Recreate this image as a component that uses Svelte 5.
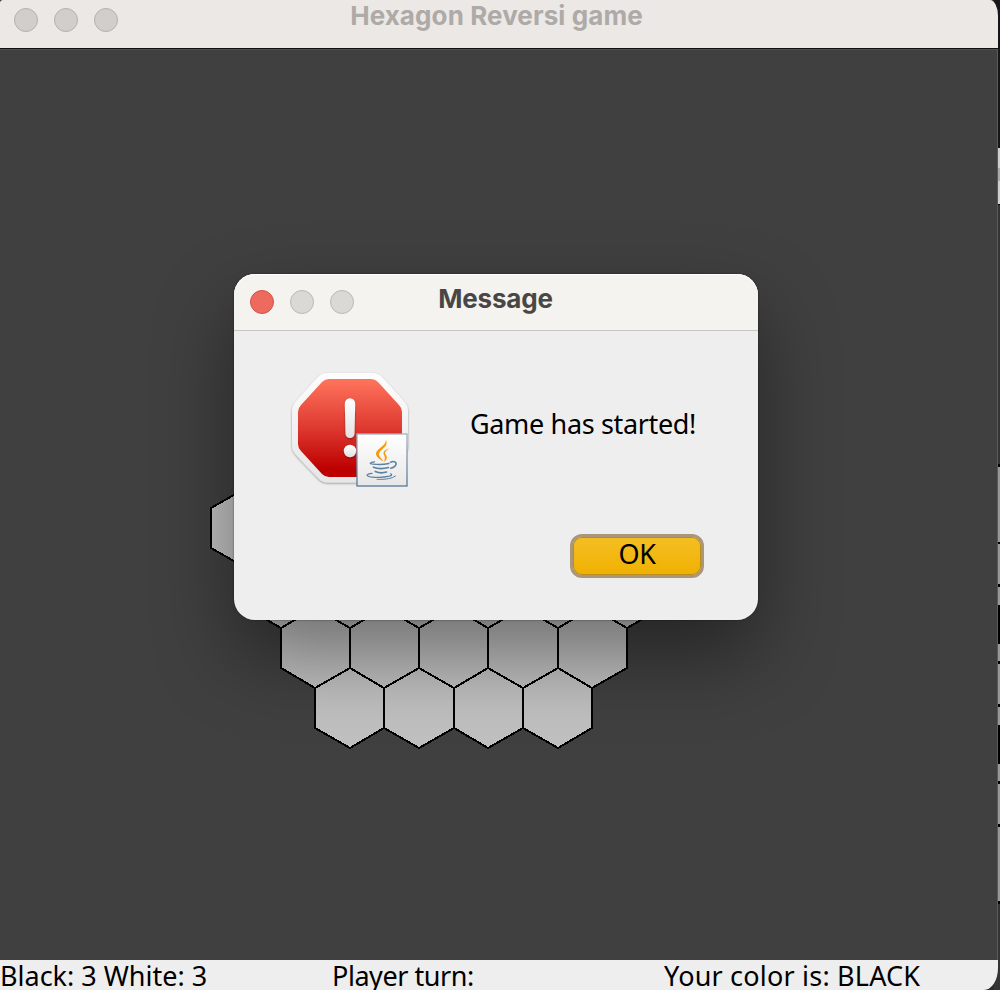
<script>
  const R = 40;
  const W = R * Math.sqrt(3);
  const cx = 453.75;
  const cy = 528;
  const hexes = [];
  for (let r = -3; r <= 3; r++) {
    const n = 7 - Math.abs(r);
    for (let i = 0; i < n; i++) {
      const x = cx + (i - (n - 1) / 2) * W;
      const y = cy + r * 60;
      hexes.push(
        [[0, -R], [W / 2, -R / 2], [W / 2, R / 2], [0, R], [-W / 2, R / 2], [-W / 2, -R / 2]]
          .map(([a, b]) => `${Math.round(x + a)},${Math.round(y + b)}`)
          .join(' ')
      );
    }
  }
  // Sliver of the neighbouring window: [height, tone]
  const strip = [
    [148, 'ink'], [20, 'pale'], [13, 'mid'], [23, 'pale'], [1, 'black'], [259, 'dark'],
    [3, 'black'], [75, 'tile'], [2, 'black'], [40, 'tile'], [3, 'black'], [18, 'tile'],
    [39, 'black'], [17, 'tile'], [3, 'black'], [40, 'tile'], [3, 'black'], [18, 'tile'],
    [39, 'black'], [17, 'tile'], [3, 'black'], [40, 'tile'], [3, 'black'], [74, 'tile'],
    [3, 'black'], [86, 'dark']
  ];
</script>

<div class="desktop">
  <div class="strip">
    {#each strip as [h, tone]}<i class={tone} style="height:{h}px"></i>{/each}
  </div>
  <main class="window">
    <header class="bar">
      <div class="lights"><span></span><span></span><span></span></div>
      <h1>Hexagon Reversi game</h1>
    </header>
    <section class="board">
      <svg width="998" height="911" viewBox="0 49 998 911" shape-rendering="crispEdges">
        {#each hexes as p}
          <polygon points={p} fill="#c0c0c0" stroke="#000" stroke-width="2" />
        {/each}
      </svg>
    </section>
    <footer>
      <span class="score">Black: 3 White: 3</span>
      <span class="turn">Player turn:</span>
      <span class="color">Your color is: BLACK</span>
    </footer>
  </main>

  <div class="dialog" role="dialog" aria-label="Message">
    <header class="dbar">
      <div class="lights"><span class="red"></span><span></span><span></span></div>
      <h2>Message</h2>
    </header>
    <div class="content">
      <svg class="icon" width="140" height="130" viewBox="0 0 140 130">
        <defs>
          <linearGradient id="red" x1="0" y1="0" x2="0" y2="1">
            <stop offset="0" stop-color="#ff745c" />
            <stop offset=".5" stop-color="#de3930" />
            <stop offset=".92" stop-color="#bd0000" />
            <stop offset="1" stop-color="#bd0000" />
          </linearGradient>
          <linearGradient id="rim" x1="0" y1="0" x2="0" y2="1">
            <stop offset="0" stop-color="#fdfdfd" />
            <stop offset="1" stop-color="#e6e6e6" />
          </linearGradient>
          <linearGradient id="mark" x1="0" y1="0" x2="0" y2="1">
            <stop offset="0" stop-color="#fff" />
            <stop offset="1" stop-color="#e2e2e2" />
          </linearGradient>
          <linearGradient id="tile" x1="0" y1="0" x2="0" y2="1">
            <stop offset="0" stop-color="#fff" />
            <stop offset="1" stop-color="#e7e7e8" />
          </linearGradient>
          <linearGradient id="edge" x1="0" y1="0" x2="0" y2="1">
            <stop offset="0" stop-color="#a3b2c3" />
            <stop offset="1" stop-color="#557695" />
          </linearGradient>
          <filter id="soft" x="-20%" y="-20%" width="140%" height="150%">
            <feDropShadow dx="0" dy="1" stdDeviation="1.1" flood-color="#000" flood-opacity=".38" />
          </filter>
        </defs>
        <path filter="url(#soft)" fill="url(#rim)" d="M48 8H92Q98 8 102 12L123 35Q128 40 128 47V80Q128 86 123 91L102 113Q98 117.500 92 117.500H48Q42 117.500 38 113L17 91Q12 86 12 80V47Q12 40 17 35L38 12Q42 8 48 8Z" />
        <path fill="url(#red)" d="M49 14H91Q95 14 98 17L119 40Q122 43 122 47V79Q122 83 119 86L98 109Q95 112 91 112H49Q45 112 42 109L21 86Q18 83 18 79V47Q18 43 21 40L42 17Q45 14 49 14Z" />
        <g fill="url(#mark)" filter="url(#soft)">
          <path d="M64.800 38.500A5.200 5.200 0 0 1 75.200 38.500L74.500 68.500A4.500 4.500 0 0 1 65.500 68.500Z" />
          <circle cx="70" cy="86" r="6.200" />
        </g>
        <rect x="77" y="69" width="50" height="52" fill="url(#tile)" stroke="url(#edge)" stroke-width="1.300" />
        <g fill="#f59a0c">
          <path d="M105.800 74.500C108.500 80 104 82.500 101 85.500C97.500 89 99 91 103.500 96.500C98 93.500 95.200 90.500 96.200 87.500C97.500 83.500 107 80 105.800 74.500Z" />
          <path d="M109.500 83.200C105.500 84.500 102.500 86.500 103.800 89.500C105 91.500 105.500 93.500 103.800 97C108 94.500 107 91 105.700 89.500C104 87.500 105.800 85.500 109.500 83.200Z" />
        </g>
        <g fill="none" stroke="#5c82a1" stroke-linecap="round">
          <path stroke-width="1.300" d="M94.500 96.800C90 97.300 88.500 98.800 93 99.200Q102 100 109 98.500" />
          <path stroke-width="1.500" d="M110.500 97.200C115 95.300 117.200 98 115.500 100.500Q114 102.500 110.800 103.300" />
          <path stroke-width="1.700" d="M93.500 102.200Q100 104.700 108.500 102.500" />
          <path stroke-width="1.700" d="M95.300 106.500Q100.500 108.800 106.500 107" />
          <path stroke-width="1.300" d="M92 108.300C86 109 85.500 111 90.500 111.800Q101 113.200 109.500 111.200Q113 110.200 110.700 108.800" />
          <path stroke-width="1.000" d="M97 114.300Q110.500 115 115.500 111" />
        </g>
      </svg>
      <p>Game has started!</p>
      <button><span>OK</span></button>
    </div>
  </div>
</div>

<style>
  :global(body) { margin: 0; overflow: hidden; }
  .desktop { position: relative; width: 1000px; height: 990px; background: #2c2c2c; overflow: hidden; }
  .strip { position: absolute; top: 0; right: 0; width: 6px; height: 990px; display: flex; flex-direction: column; }
  .strip i { display: block; flex: none; }
  .ink { background: #17171b; }
  .pale { background: #cfcfcd; }
  .mid { background: #aaa; }
  .dark { background: #343434; }
  .tile { background: #989898; }
  .black { background: #000; }
  .window {
    position: relative; width: 998px; height: 990px; overflow: hidden;
    border-radius: 3px 8px 14px 0 / 3px 16px 22px 0;
    display: flex; flex-direction: column; background: #404040;
  }
  .window::after { content: ''; position: absolute; top: 49px; right: 0; width: 1px; height: 911px; background: #5b5b5b; }
  .bar {
    box-sizing: border-box; height: 49px; flex: none; background: #ece8e5; border-bottom: 1px solid #111;
    display: grid; grid-template-columns: 150px 1fr 155px;
  }
  .lights { display: flex; gap: 16px; }
  .lights span { box-sizing: border-box; width: 24px; height: 24px; border-radius: 50%; border: 1px solid #b3b0ad; background: #d2cecb; }
  .bar .lights { padding: 8px 0 0 14px; }
  h1, h2 { margin: 0; font: 700 26px/32px Inter, sans-serif; text-align: center; white-space: nowrap; }
  h1 { color: #aeaaa7; letter-spacing: 0.1px; }
  .board { height: 911px; flex: none; box-shadow: inset 0 1px #505050; }
  .board svg { display: block; }
  footer {
    height: 30px; flex: none; background: #eee; color: #000; display: grid; grid-template-columns: 332px 332px 1fr;
    font: 27px/32px "Noto Sans", sans-serif; white-space: nowrap;
  }
  .turn { letter-spacing: -0.45px; }
  .color { letter-spacing: 0.2px; }
  .dialog {
    position: absolute; left: 234px; top: 274px; width: 524px; height: 346px; border-radius: 21px;
    background: #eee; box-shadow: 0 0 2px rgba(0, 0, 0, .55), 0 36px 80px rgba(0, 0, 0, .42);
    display: flex; flex-direction: column;
  }
  .dbar {
    box-sizing: border-box; height: 57px; flex: none; background: #f5f3ef; border-bottom: 1px solid #c6c6c6;
    border-radius: 21px 21px 0 0; box-shadow: inset 0 1px #fff;
    display: grid; grid-template-columns: 150px 1fr 151px;
  }
  .dbar .lights { padding: 16px 0 0 16px; }
  .dbar .lights span { background: #dad9d6; border-color: #bbb9b6; }
  .dbar .lights .red { background: #ed6a5e; border-color: #d45147; }
  h2 { color: #484746; padding-top: 9px; letter-spacing: -0.2px; }
  .content { flex: 1; display: grid; grid-template-columns: 190px 1fr 54px; grid-template-rows: 203px 44px; }
  .icon { margin: 34px 0 0 46px; }
  p { grid-column: 2 / 4; margin: 75px 0 0 46px; font: 27px/36px "Noto Sans", sans-serif; letter-spacing: -0.35px; color: #000; white-space: nowrap; }
  button {
    grid-column: 2; grid-row: 2; justify-self: end; box-sizing: border-box; width: 134px; height: 44px; padding: 0 0 4px;
    border: 3px solid #aa977a; border-radius: 12px; background: linear-gradient(#f4bf25, #f0b000) padding-box;
    box-shadow: inset 0 0 0 1px #b98d1c; font: 27px/34px "Noto Sans", sans-serif; letter-spacing: -0.5px; color: #000;
  }
</style>
